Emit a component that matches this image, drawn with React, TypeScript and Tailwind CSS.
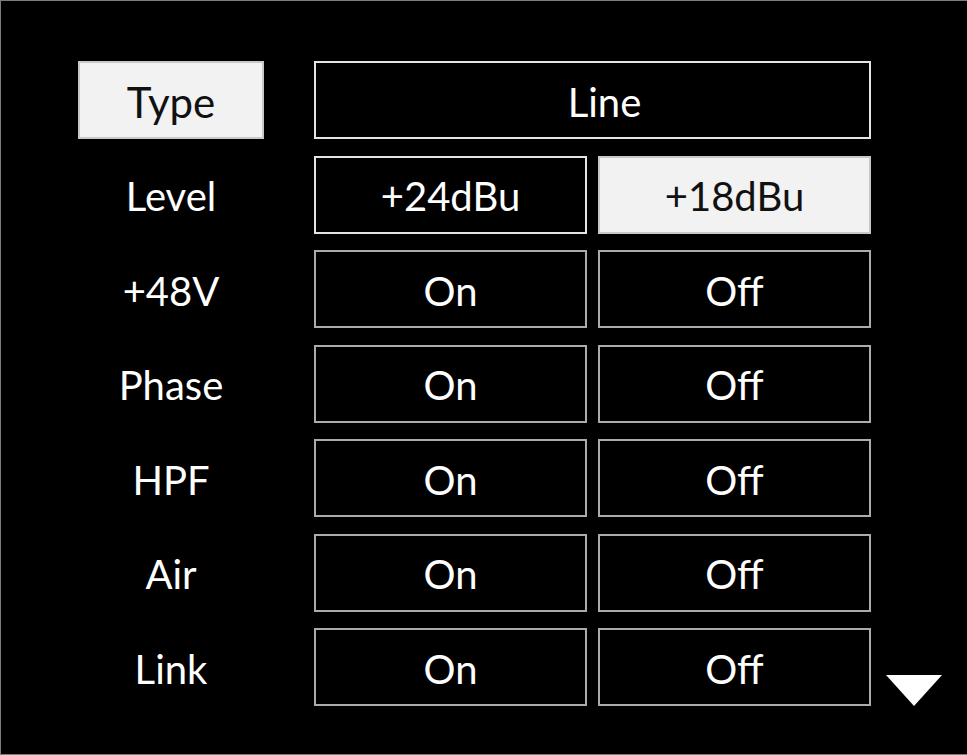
import React from 'react';

type Cell = { label: string; selected?: boolean; bright?: boolean };

interface Row {
  name: string;
  nameSelected?: boolean;
  cells: Cell[];
}

const rows: Row[] = [
  { name: 'Type', nameSelected: true, cells: [{ label: 'Line', bright: true }] },
  { name: 'Level', cells: [{ label: '+24dBu', bright: true }, { label: '+18dBu', selected: true }] },
  { name: '+48V', cells: [{ label: 'On' }, { label: 'Off' }] },
  { name: 'Phase', cells: [{ label: 'On' }, { label: 'Off' }] },
  { name: 'HPF', cells: [{ label: 'On' }, { label: 'Off' }] },
  { name: 'Air', cells: [{ label: 'On' }, { label: 'Off' }] },
  { name: 'Link', cells: [{ label: 'On' }, { label: 'Off' }] },
];

function OptionBox({ cell, wide }: { cell: Cell; wide: boolean }) {
  const tone = cell.selected
    ? 'bg-[#f2f2f2] text-[#111] border-[#c8c8c8]'
    : cell.bright
      ? 'bg-black text-white border-[#e4e4e4]'
      : 'bg-black text-white border-[#ababab]';
  return (
    <div
      className={`flex h-[78px] items-center justify-center border-2 pt-[3px] ${tone} ${
        wide ? 'w-[557px] pl-[24px]' : 'w-[273px]'
      }`}
    >
      {cell.label}
    </div>
  );
}

export default function App() {
  return (
    <div
      className="w-[967px] h-[755px] bg-black border-t border-l border-b border-[#7d7d7d] overflow-hidden"
      style={{ fontFamily: 'Lato, "Open Sans", sans-serif' }}
    >
      <div className="flex flex-col gap-[16.5px] pl-[77px] pt-[60px] text-[40px] leading-none">
        {rows.map((row, i) => (
          <div key={row.name} className="flex items-end">
            <div
              className={`flex h-[78px] w-[186px] items-center justify-center pt-[3px] ${
                row.nameSelected
                  ? 'bg-[#f2f2f2] text-[#111] border-2 border-[#c8c8c8] text-[42px]'
                  : 'text-white'
              }`}
            >
              {row.name}
            </div>
            <div className="ml-[50px] flex gap-[11px]">
              {row.cells.map((c) => (
                <OptionBox key={c.label} cell={c} wide={row.cells.length === 1} />
              ))}
            </div>
            {i === rows.length - 1 && (
              <svg className="ml-[15px]" width="56" height="31" viewBox="0 0 56 31">
                <polygon points="0,0 56,0 28,31" fill="#fff" />
              </svg>
            )}
          </div>
        ))}
      </div>
    </div>
  );
}
